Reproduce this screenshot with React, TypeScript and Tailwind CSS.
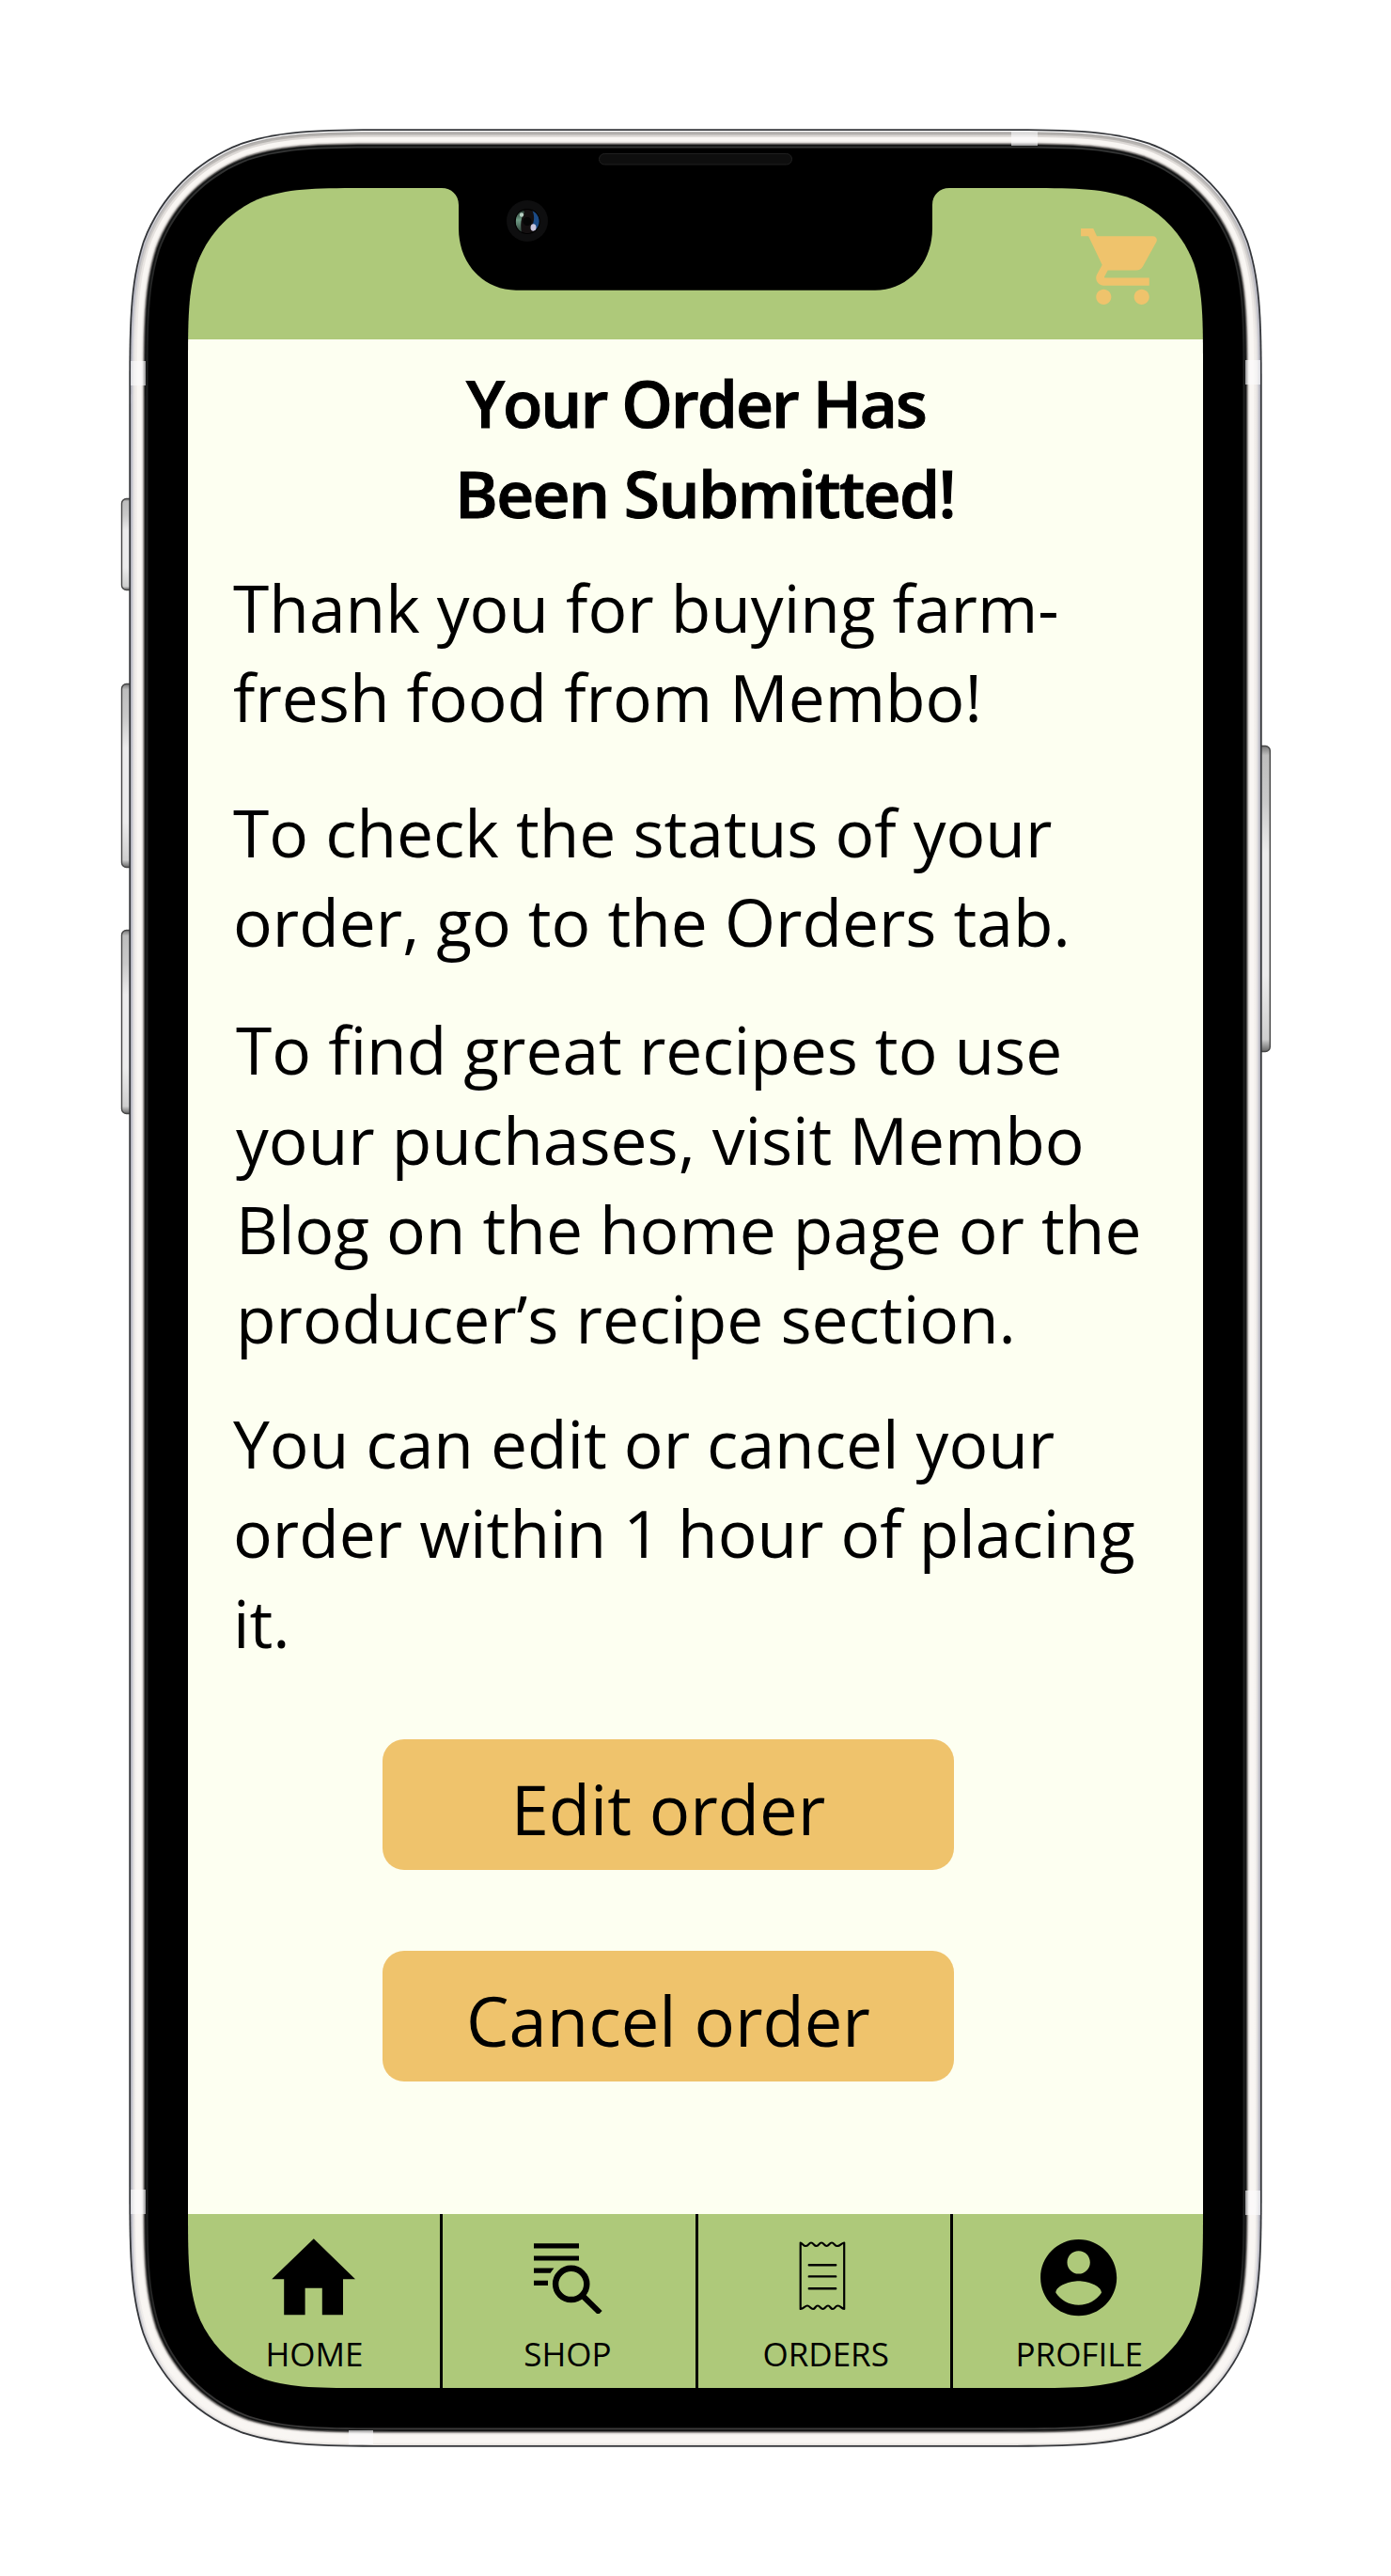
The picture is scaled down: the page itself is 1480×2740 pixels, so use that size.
import React from "react";

// Continuous-curvature corner, expressed as fractions of the nominal radius.
function squircle(l: number, t: number, r: number, b: number, q: number) {
  const k = [1.528665, 1.088493, 0.868407, 0.631494, 0.372824, 0.16906, 0.074911].map((v) => v * q);
  const [a, c, d, e, f, g, h] = k;
  return [
    `M${l + a} ${t}H${r - a}`,
    `C${r - c} ${t} ${r - d} ${t} ${r - e} ${t + h}`,
    `C${r - f} ${t + g} ${r - g} ${t + f} ${r - h} ${t + e}`,
    `C${r} ${t + d} ${r} ${t + c} ${r} ${t + a}`,
    `V${b - a}`,
    `C${r} ${b - c} ${r} ${b - d} ${r - h} ${b - e}`,
    `C${r - g} ${b - f} ${r - f} ${b - g} ${r - e} ${b - h}`,
    `C${r - d} ${b} ${r - c} ${b} ${r - a} ${b}`,
    `H${l + a}`,
    `C${l + c} ${b} ${l + d} ${b} ${l + e} ${b - h}`,
    `C${l + f} ${b - g} ${l + g} ${b - f} ${l + h} ${b - e}`,
    `C${l} ${b - d} ${l} ${b - c} ${l} ${b - a}`,
    `V${t + a}`,
    `C${l} ${t + c} ${l} ${t + d} ${l + h} ${t + e}`,
    `C${l + g} ${t + f} ${l + f} ${t + g} ${l + e} ${t + h}`,
    `C${l + d} ${t} ${l + c} ${t} ${l + a} ${t}Z`,
  ].join("");
}

const NOTCH =
  "M470 199V200C480 200 488 207 488 218V243C488 281 515 308.7 549 308.7H931C965 308.7 992 281 992 243V218C992 207 1000 200 1010 200V199Z";

const SCREEN = squircle(200, 200, 1280, 2540, 128);

const ring = (i: number) => squircle(137.3 + i, 137.3 + i, 1342.7 - i, 2602.7 - i, 191 - i);

const RINGS: [number, string][] = [
  [0, "#34363a"],
  [1.8, "url(#edge)"],
  [3, "url(#rimA)"],
  [4.3, "url(#rimB)"],
  [6.3, "url(#rimC)"],
  [8.5, "#f9f6f3"],
  [13, "#eeebe8"],
  [14.2, "#cbc8c5"],
  [15, "#8f8b89"],
  [15.9, "#4a4948"],
  [16.8, "#131414"],
  [18.4, "url(#lip)"],
  [20.2, "#000000"],
];

const BUTTONS: [number, number, number][] = [
  [129.5, 530.5, 97],
  [129.5, 727.5, 195],
  [129.5, 989.5, 195],
  [1335, 793.5, 325],
];

const ANTENNAS: [number, number, number, number][] = [
  [139, 384, 16, 26],
  [1325, 383, 16, 26],
  [139, 2329, 16, 26],
  [1325, 2330, 16, 26],
  [1076, 140, 28, 15],
  [371, 2585, 26, 15],
];

function PhoneFrame() {
  return (
    <svg className="pointer-events-none absolute inset-0" width="1480" height="2740" viewBox="0 0 1480 2740" aria-hidden="true">
      <defs>
        <linearGradient id="edge" x1="0" y1="0" x2="0" y2="1">
          <stop offset="0" stopColor="#ffffff" />
          <stop offset="0.06" stopColor="#bdbdc8" />
          <stop offset="0.92" stopColor="#bdbdc8" />
          <stop offset="1" stopColor="#e6e3e0" />
        </linearGradient>
        <linearGradient id="rimA" x1="0" y1="0" x2="0" y2="1">
          <stop offset="0" stopColor="#a9a6a4" />
          <stop offset="0.09" stopColor="#c8c8d0" />
          <stop offset="0.9" stopColor="#c8c8d0" />
          <stop offset="1" stopColor="#f3efeb" />
        </linearGradient>
        <linearGradient id="rimB" x1="0" y1="0" x2="0" y2="1">
          <stop offset="0" stopColor="#b5b2af" />
          <stop offset="0.09" stopColor="#e6e3e2" />
          <stop offset="0.9" stopColor="#e6e3e2" />
          <stop offset="1" stopColor="#f9f6f3" />
        </linearGradient>
        <linearGradient id="rimC" x1="0" y1="0" x2="0" y2="1">
          <stop offset="0" stopColor="#dad6d3" />
          <stop offset="0.09" stopColor="#f1edea" />
          <stop offset="1" stopColor="#f9f6f3" />
        </linearGradient>
        <linearGradient id="lip" x1="0" y1="0" x2="0" y2="1">
          <stop offset="0" stopColor="#343535" />
          <stop offset="0.09" stopColor="#1e1f1f" />
          <stop offset="0.92" stopColor="#1e1f1f" />
          <stop offset="1" stopColor="#3c3b3b" />
        </linearGradient>
        <linearGradient id="key" x1="0" y1="0" x2="0" y2="1">
          <stop offset="0" stopColor="#777" />
          <stop offset="0.03" stopColor="#bdbdbd" />
          <stop offset="0.18" stopColor="#c9c9c9" />
          <stop offset="0.35" stopColor="#ececec" />
          <stop offset="0.75" stopColor="#ececec" />
          <stop offset="0.96" stopColor="#cfcfcf" />
          <stop offset="1" stopColor="#666" />
        </linearGradient>
        <linearGradient id="green" x1="0" y1="0" x2="0" y2="1">
          <stop offset="0" stopColor="#1a2822" />
          <stop offset="0.45" stopColor="#6f9c86" />
          <stop offset="1" stopColor="#2b3b34" />
        </linearGradient>
        <clipPath id="lens">
          <circle cx="561" cy="235.5" r="12.6" />
        </clipPath>
        <mask id="body" maskUnits="userSpaceOnUse" x="0" y="0" width="1480" height="2740">
          <rect width="1480" height="2740" fill="#fff" />
          <path d={SCREEN} fill="#000" />
        </mask>
      </defs>
      {BUTTONS.map(([x, y, h]) => (
        <rect key={y} x={x} y={y} width="16.3" height={h} rx="5" fill="url(#key)" stroke="#454545" strokeWidth="1.4" />
      ))}
      <g mask="url(#body)">
        {RINGS.map(([inset, fill]) => (
          <path key={inset} d={ring(inset)} fill={fill} />
        ))}
      </g>
      {ANTENNAS.map(([x, y, w, h]) => (
        <rect key={`${x}-${y}`} x={x} y={y} width={w} height={h} fill="#fbfcfd" fillOpacity="0.6" />
      ))}
      <path d={NOTCH} fill="#000" />
      <rect x="637.5" y="163.5" width="205" height="11.5" rx="5.7" fill="#0e0e0e" stroke="#202020" />
      <circle cx="561" cy="235" r="22" fill="#0e0e0f" />
      <circle cx="561" cy="235.5" r="13.6" fill="#000" />
      <g clipPath="url(#lens)">
        <circle cx="561" cy="235.5" r="12.6" fill="#130f10" />
        <path d="M557 223C547 225 546 244 555 247.5C553.5 240 554 231 558 226Z" fill="url(#green)" />
        <path d="M566 223C575 228 577 239 571 246L565 242C569 236 569 229 566 223Z" fill="#1b4a85" />
        <circle cx="555" cy="228.5" r="2.2" fill="#b7cfc2" />
        <ellipse cx="567.5" cy="242" rx="3" ry="3.8" fill="#c9c5dc" />
      </g>
      <circle cx="561" cy="235.5" r="4.5" fill="#050505" />
    </svg>
  );
}

function CartIcon() {
  return (
    <svg width="97" height="97" viewBox="0 0 24 24" fill="#efc36c" aria-label="Cart">
      <path d="M7 18c-1.1 0-1.99.9-1.99 2S5.9 22 7 22s2-.9 2-2-.9-2-2-2zM1 2v2h2l3.6 7.59-1.35 2.45c-.16.28-.25.61-.25.96 0 1.1.9 2 2 2h12v-2H7.42c-.14 0-.25-.11-.25-.25l.03-.12.9-1.63h7.45c.75 0 1.41-.41 1.75-1.03l3.58-6.49c.08-.14.12-.31.12-.48 0-.55-.45-1-1-1H5.21l-.94-2H1zm16 16c-1.1 0-1.99.9-1.99 2s.89 2 1.99 2 2-.9 2-2-.9-2-2-2z" />
    </svg>
  );
}

function HomeIcon() {
  return (
    <svg width="90" height="82" viewBox="0 0 90 82">
      <path d="M44.8 0.3L89 43.3H76V81.3H53.8V52.8H35.6V81.3H13.2V43.3H0.2Z" />
    </svg>
  );
}

function ShopIcon() {
  return (
    <svg className="relative -top-px right-[2px]" width="74" height="80" viewBox="0 0 74 80" fill="none" stroke="#000">
      <path d="M1 7.8H49M1 21H49" strokeWidth="5.2" />
      <path d="M1 31.5H22.4L18.6 36.8H1ZM1 44.8H16V50H1Z" fill="#000" stroke="none" />
      <circle cx="40.7" cy="48.4" r="16.6" strokeWidth="6.4" />
      <path d="M53 61L71.5 79.2" strokeWidth="6" />
    </svg>
  );
}

function OrdersIcon() {
  return (
    <svg className="relative right-[2px] -top-px" width="50" height="74" viewBox="0 0 50 74" fill="none" stroke="#000" strokeWidth="2.2" strokeLinecap="round" strokeLinejoin="round">
      <path d="M1.7 1.5C4 2 4.5 5 7.5 5S10.5 1.5 13 1.5S16 5 18.7 5S21.5 1.5 24 1.5S27 5 29.5 5S32.5 1.5 35 1.5S38 5 41 5S45 2 48.2 1.5V72C45 71.5 44.5 68.5 41.5 68.5S38.5 72 36 72S33.5 68.5 31 68.5S28 72 25.5 72S22.5 68.5 20 68.5S17.5 72 15 72S11.5 68.5 9 68.5S5 71.5 1.7 72Z" />
      <path d="M10.8 25.2H39.2M10.8 37.4H39.2M10.8 50.2H39.2" strokeWidth="2.4" />
    </svg>
  );
}

function ProfileIcon() {
  return (
    <svg width="97.3" height="97.3" viewBox="0 0 24 24">
      <path d="M12 2C6.48 2 2 6.48 2 12s4.48 10 10 10 10-4.48 10-10S17.52 2 12 2zm0 3c1.66 0 3 1.34 3 3s-1.34 3-3 3-3-1.34-3-3 1.34-3 3-3zm0 14.2c-2.5 0-4.71-1.28-6-3.22.03-1.99 4-3.08 6-3.08 1.99 0 5.97 1.09 6 3.08-1.29 1.94-3.5 3.22-6 3.22z" />
    </svg>
  );
}

type NavItemProps = { label: string; icon: React.ReactNode; cell: string; text: string };

function NavItem({ label, icon, cell, text }: NavItemProps) {
  return (
    <button className={`flex flex-col items-center border-black ${cell}`}>
      <span className="flex h-[134px] items-center justify-center">{icon}</span>
      <span className={`-mt-[9px] text-[35px] leading-[48px] ${text}`}>{label}</span>
    </button>
  );
}

function Action({ children }: { children: React.ReactNode }) {
  return (
    <button className="flex h-[139px] w-[607.3px] justify-center rounded-[23px] bg-[#efc36c] pt-[24px] text-[72.3px] leading-[100px] whitespace-nowrap">
      {children}
    </button>
  );
}

export default function App() {
  return (
    <div className="relative h-[2740px] w-[1480px] overflow-hidden bg-white px-[200px] py-[200px] font-['Open_Sans',sans-serif] text-black">
      <main className="flex h-[2340px] w-[1080px] flex-col bg-[#fdfff1]">
        <header className="flex h-[161px] shrink-0 justify-end bg-[#aec97a] pt-[35px] pr-[37px]">
          <CartIcon />
        </header>

        <section className="flex flex-1 flex-col pl-[48px] text-[69.5px] leading-[95.2px] whitespace-nowrap">
          <h1 className="mt-[20.3px] font-semibold [-webkit-text-stroke:1px_#000]">
            <span className="block pl-[248px] tracking-[-2.1px]">Your Order Has</span>
            <span className="block pl-[236px] tracking-[-1.65px]">Been Submitted!</span>
          </h1>
          <p className="mt-[27.3px]">
            Thank you for buying farm-
            <br />
            fresh food from Membo!
          </p>
          <p className="mt-[48.6px]">
            To check the status of your
            <br />
            order, go to the Orders tab.
          </p>
          <p className="mt-[41px] pl-[3px]">
            To find great recipes to use
            <br />
            your puchases, visit Membo
            <br />
            Blog on the home page or the
            <br />
            producer’s recipe section.
          </p>
          <p className="mt-[38px]">
            You can edit or cancel your
            <br />
            order within 1 hour of placing
            <br />
            it.
          </p>
          <div className="mt-[76.5px] flex flex-col gap-[86px] pl-[159.3px]">
            <Action>Edit order</Action>
            <Action>Cancel order</Action>
          </div>
        </section>

        <nav className="flex h-[184.7px] shrink-0 bg-[#aec97a]">
          <NavItem label="HOME" icon={<HomeIcon />} cell="w-[271px] border-r-[3px]" text="pl-[1px]" />
          <NavItem label="SHOP" icon={<ShopIcon />} cell="w-[272px] border-r-[3px]" text="pr-[3px]" />
          <NavItem label="ORDERS" icon={<OrdersIcon />} cell="w-[271.4px] border-r-[3px]" text="pl-[3px]" />
          <NavItem label="PROFILE" icon={<ProfileIcon />} cell="w-[265.6px]" text="pl-[2px]" />
        </nav>
      </main>
      <PhoneFrame />
    </div>
  );
}
